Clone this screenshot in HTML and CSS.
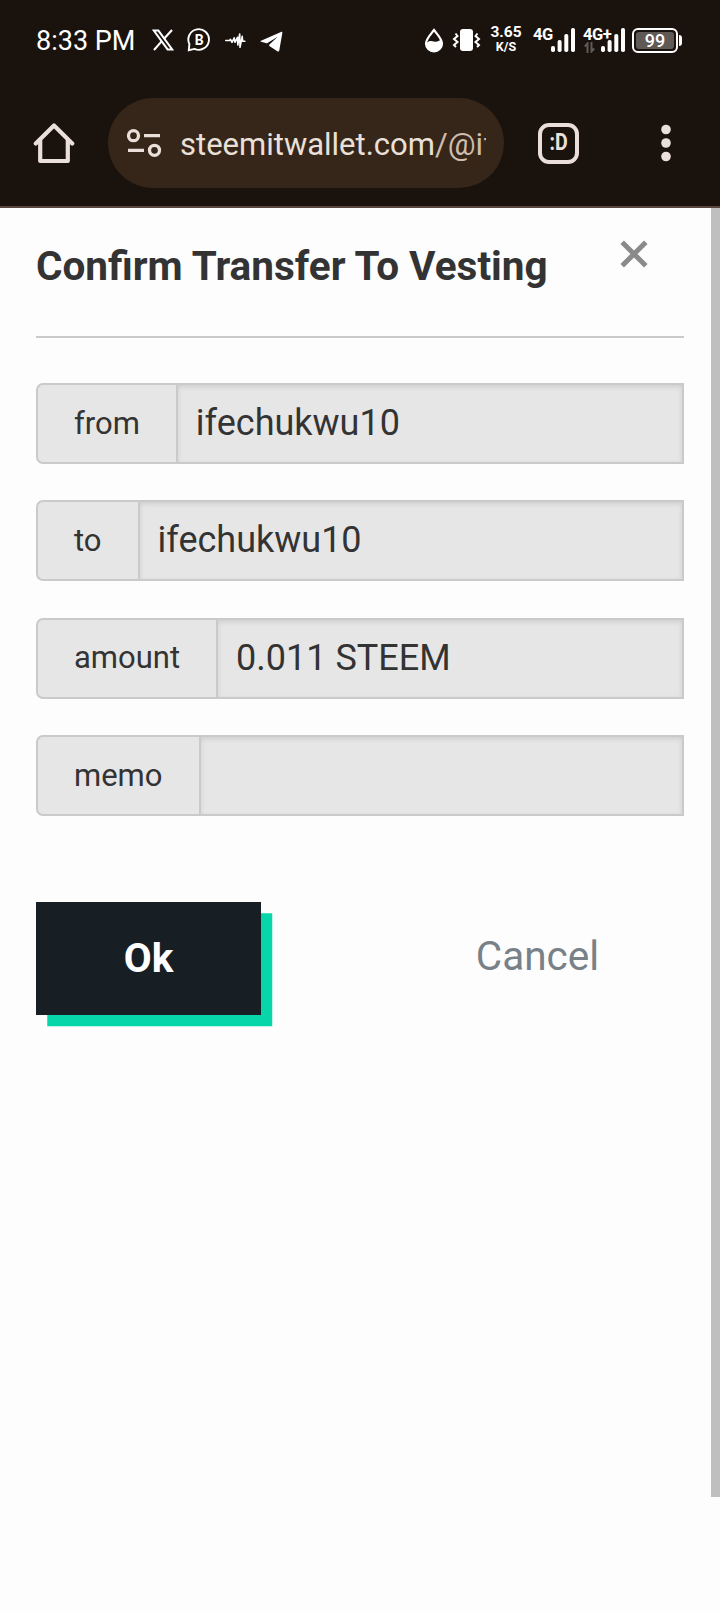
FILE: index.html
```html
<!DOCTYPE html>
<html lang="en">
<head>
    <meta charset="UTF-8">
    <meta name="viewport" content="width=device-width, initial-scale=1.0">
    <title>Confirm Transfer To Vesting</title>
    <link rel="stylesheet" href="styles.css">
</head>
<body>

    <div class="status-bar">
        <span class="clock">8:33 PM</span>
        <svg class="icon-x" width="22" height="22" viewBox="0 0 22 22" fill="none" stroke="#fff">
            <path d="M1.8 1.6h4.6l13.8 18.8h-4.6z" stroke-width="2"/>
            <path d="M20 1l-8 8.8M9.6 12.4L2 21" stroke-width="2.1"/>
        </svg>
        <svg class="icon-chat" width="24" height="24" viewBox="0 0 24 24">
            <path d="M1.8 22.2l.6-6.2A10.3 10.3 0 1 1 7.5 20.9z" fill="none" stroke="#fff" stroke-width="1.9"/>
            <text class="chat-letter" x="12.2" y="16.8" text-anchor="middle">B</text>
        </svg>
        <svg class="icon-wave" width="21" height="16" viewBox="0 0 21 16" fill="none" stroke="#fff" stroke-width="1.6" stroke-linejoin="round" stroke-linecap="round">
            <path d="M.8 8.500h3.700l1-1.200 1.500 3 2.200-4.500.8 4.500 2.500-5 .3 7.700 1.900-11 .3 13.300 2.200-11 .5 5h2.200"/>
        </svg>
        <svg class="icon-plane" width="23" height="21" viewBox="0 0 23 21" fill="#fff">
            <path d="M1 9.700L21 1c1-.4 1.500.2 1.300 1.200l-3 17c-.2 1.300-1 1.600-2 1L9.700 15.200c-.9-.6-.8-1.100 0-1.900l8-7.600-10.200 6.300c-.6.4-1.200.3-1.800.1L1 10.700c-.8-.3-.8-.7 0-1z"/>
        </svg>

        <div class="status-right">
            <svg class="icon-drop" width="20" height="25" viewBox="0 0 20 25">
                <path d="M10 2C7 6 2 11 2 15.500a8 7.800 0 0 0 16 0C18 11 13 6 10 2z" fill="none" stroke="#fff" stroke-width="2.2"/>
                <path d="M2 15c3-2.500 5.500-2.500 8-1.500 3 1.200 5-1 6.500-1.500 3 6-.5 11.500-6.500 11.500S1.500 20 2 15z" fill="#fff"/>
            </svg>
            <svg class="icon-vibrate" width="29" height="24" viewBox="0 0 29 24">
                <rect x="8" y="1" width="13" height="22" rx="3" fill="#fff"/>
                <path d="M3.500 5.500l2 2.500-3.500 3 3.500 3-3.500 3 2 2M25.500 5.500l-2 2.500 3.500 3-3.500 3 3.500 3-2 2" fill="none" stroke="#fff" stroke-width="2"/>
            </svg>
            <div class="speed">
                <span class="speed-value">3.65</span>
                <span class="speed-unit">K/S</span>
            </div>
            <div class="signal">
                <span class="network">4G</span>
                <svg width="24" height="24" viewBox="0 0 24 24" fill="#fff">
                    <rect x="0" y="18" width="4" height="6" rx="1.8"/>
                    <rect x="6.6" y="12" width="4" height="12" rx="1.8"/>
                    <rect x="13.3" y="6" width="4" height="18" rx="1.8"/>
                    <rect x="20" y="0" width="4" height="24" rx="1.8"/>
                </svg>
            </div>
            <div class="signal signal-plus">
                <span class="network">4G+</span>
                <svg class="arrows" width="11" height="11" viewBox="0 0 11 11" fill="none" stroke="#5f5a56" stroke-width="2">
                    <path d="M3.500 11V1.500L.8 4.500M7.500 0v9.500l2.700-3"/>
                </svg>
                <svg width="24" height="24" viewBox="0 0 24 24" fill="#fff">
                    <rect x="0" y="18" width="4" height="6" rx="1.8"/>
                    <rect x="6.6" y="12" width="4" height="12" rx="1.8"/>
                    <rect x="13.3" y="6" width="4" height="18" rx="1.8"/>
                    <rect x="20" y="0" width="4" height="24" rx="1.8"/>
                </svg>
            </div>
            <div class="battery"><span>99</span></div>
        </div>
    </div>

    <header class="toolbar">
        <svg class="icon-home" width="42" height="42" viewBox="0 0 42 42" fill="none" stroke="#ebe0d9" stroke-width="4.2" stroke-linejoin="round">
            <path d="M2.800 21.500L21 3.500l18.200 18" stroke-linecap="round"/>
            <path d="M7.200 18v21h27.600V18"/>
        </svg>
        <div class="address">
            <svg width="36" height="30" viewBox="0 0 36 30" fill="none" stroke="#ebe0d9" stroke-width="3.3">
                <circle cx="7.5" cy="7.7" r="5"/>
                <path d="M18 7.700h16M2 22.300h16"/>
                <circle cx="28.5" cy="22.3" r="5"/>
            </svg>
            <div class="url">steemitwallet.com<span>/@if</span></div>
        </div>
        <div class="tabs"><span>:D</span></div>
        <svg class="icon-menu" width="12" height="40" viewBox="0 0 12 40" fill="#ebe0d9">
            <circle cx="6" cy="6.5" r="4.8"/>
            <circle cx="6" cy="20" r="4.8"/>
            <circle cx="6" cy="33.5" r="4.8"/>
        </svg>
    </header>

    <main class="page">
        <div class="modal">
            <div class="modal-header">
                <h3>Confirm Transfer To Vesting</h3>
                <button class="close-button" aria-label="Close">
                    <svg width="28" height="28" viewBox="0 0 28 28" stroke="#8a8a8a" stroke-width="5">
                        <path d="M2.200 2.200l23.600 23.600M25.800 2.200L2.200 25.800"/>
                    </svg>
                </button>
            </div>
            <hr>
            <div class="input-group">
                <span class="input-label">from</span>
                <div class="input-field">ifechukwu10</div>
            </div>
            <div class="input-group">
                <span class="input-label">to</span>
                <div class="input-field">ifechukwu10</div>
            </div>
            <div class="input-group">
                <span class="input-label">amount</span>
                <div class="input-field">0.011 STEEM</div>
            </div>
            <div class="input-group">
                <span class="input-label">memo</span>
                <div class="input-field"></div>
            </div>
            <div class="actions">
                <button class="ok-button">Ok</button>
                <button class="cancel-button">Cancel</button>
            </div>
        </div>
        <div class="scrollbar"></div>
    </main>

</body>
</html>
```
FILE: styles.css
```css
* {
    box-sizing: border-box;
}
body {
    margin: 0;
    width: 720px;
    height: 1612px;
    overflow: hidden;
    font-family: Roboto, sans-serif;
    background-color: #fdfdfd;
    color: #333;
}
svg {
    display: block;
    flex: none;
}

/* phone status bar */
.status-bar {
    display: flex;
    align-items: center;
    height: 80px;
    padding: 0 36px;
    background-color: #1a120d;
    color: #fff;
}
.clock {
    width: 116px;
    font-size: 27px;
    line-height: 32px;
    padding-top: 2px;
    white-space: nowrap;
}
.icon-chat {
    margin-left: 13px;
}
.chat-letter {
    fill: #fff;
    font-size: 14px;
    font-weight: 700;
}
.icon-wave {
    margin-left: 14px;
}
.icon-plane {
    margin-left: 14px;
    margin-top: 2px;
}
.status-right {
    display: flex;
    align-items: center;
    margin-left: auto;
    height: 26px;
}
.icon-vibrate {
    margin-left: 8px;
}
.speed {
    width: 32px;
    margin: -2px 0 0 9px;
    display: flex;
    flex-direction: column;
    align-items: center;
    font-weight: 700;
}
.speed-value {
    font-size: 15.5px;
    line-height: 15px;
}
.speed-unit {
    font-size: 12.5px;
    line-height: 14px;
}
.signal {
    position: relative;
    display: flex;
    justify-content: flex-end;
    width: 41px;
    margin-left: 12px;
}
.signal-plus {
    margin-left: 9px;
}
.network {
    position: absolute;
    left: -1px;
    top: -2px;
    font-size: 16.5px;
    line-height: 18px;
    font-weight: 700;
    letter-spacing: -0.5px;
}
.arrows {
    position: absolute;
    left: 0;
    top: 14px;
}
.battery {
    position: relative;
    width: 46px;
    height: 25px;
    margin: 0 6px 0 7px;
    padding: 2px;
    border: 2px solid #fff;
    border-radius: 6px;
}
.battery span {
    display: block;
    height: 17px;
    border-radius: 3px;
    background-color: #5f5a56;
    font-size: 18px;
    line-height: 18px;
    font-weight: 500;
    text-align: center;
}
.battery::after {
    content: "";
    position: absolute;
    right: -6px;
    top: 5px;
    width: 3px;
    height: 11px;
    border-radius: 0 3px 3px 0;
    background-color: #fff;
}

/* browser toolbar */
.toolbar {
    display: flex;
    align-items: center;
    height: 128px;
    padding: 0 48px 0 33px;
    background-color: #1a120d;
    border-bottom: 2px solid #5a463c;
}
.address {
    display: flex;
    align-items: center;
    width: 396px;
    height: 90px;
    margin-left: 33px;
    padding: 0 18px;
    border-radius: 45px;
    background-color: #352619;
}
.url {
    width: 306px;
    margin-left: 18px;
    overflow: hidden;
    white-space: nowrap;
    color: #ebe0d9;
    font-size: 31px;
    line-height: 40px;
    padding-top: 4px;
}
.url span {
    color: #d0bdae;
}
.tabs {
    display: flex;
    justify-content: center;
    width: 41px;
    height: 41px;
    margin-left: 34px;
    border: 4px solid #ebe0d9;
    border-radius: 11px;
    color: #ebe0d9;
    font-size: 23px;
    line-height: 32px;
    font-weight: 700;
}
.tabs span {
    transform: scaleX(0.85);
}
.icon-menu {
    margin-left: auto;
}

/* transfer dialog */
.page {
    display: flex;
    justify-content: space-between;
    align-items: flex-start;
}
.modal {
    width: 684px;
    padding: 36px 0 0 36px;
}
.modal-header {
    display: flex;
    justify-content: space-between;
    height: 92px;
}
.modal-header h3 {
    margin: 0;
    font-size: 40.5px;
    line-height: 44px;
    font-weight: 700;
    white-space: nowrap;
}
.close-button {
    margin: -4px 36px 0 0;
    padding: 0;
    height: 28px;
    border: none;
    background: none;
    cursor: pointer;
}
hr {
    height: 2px;
    margin: 0 0 45px;
    border: none;
    background-color: #cacaca;
}
.input-group {
    display: flex;
    height: 81px;
    margin-bottom: 36.4px;
}
.input-label {
    display: flex;
    align-items: center;
    padding: 0 36px 1px;
    border: 2px solid #cacaca;
    border-right: none;
    border-radius: 7px 0 0 7px;
    background-color: #e6e6e6;
    font-size: 31px;
}
.input-field {
    flex: 1;
    padding: 0 18px;
    border: 2px solid #cacaca;
    background-color: #e6e6e6;
    box-shadow: inset 0 2px 5px rgba(10, 10, 10, 0.1);
    font-size: 36px;
    line-height: 76px;
}
.actions {
    display: flex;
    margin-top: 86px;
}
.ok-button,
.cancel-button {
    height: 113px;
    padding: 0;
    border: none;
    font-family: inherit;
    font-size: 40.5px;
    cursor: pointer;
}
.ok-button {
    width: 225px;
    padding-bottom: 2px;
    background-color: #171f24;
    color: #fff;
    font-weight: 700;
    box-shadow: 11.25px 11.25px 0 #06d6a9;
}
.cancel-button {
    width: 225px;
    margin-left: 164px;
    padding-bottom: 5px;
    background: none;
    color: #788187;
}
.scrollbar {
    width: 9px;
    height: 1289px;
    background-color: #bfbfbf;
}
```
